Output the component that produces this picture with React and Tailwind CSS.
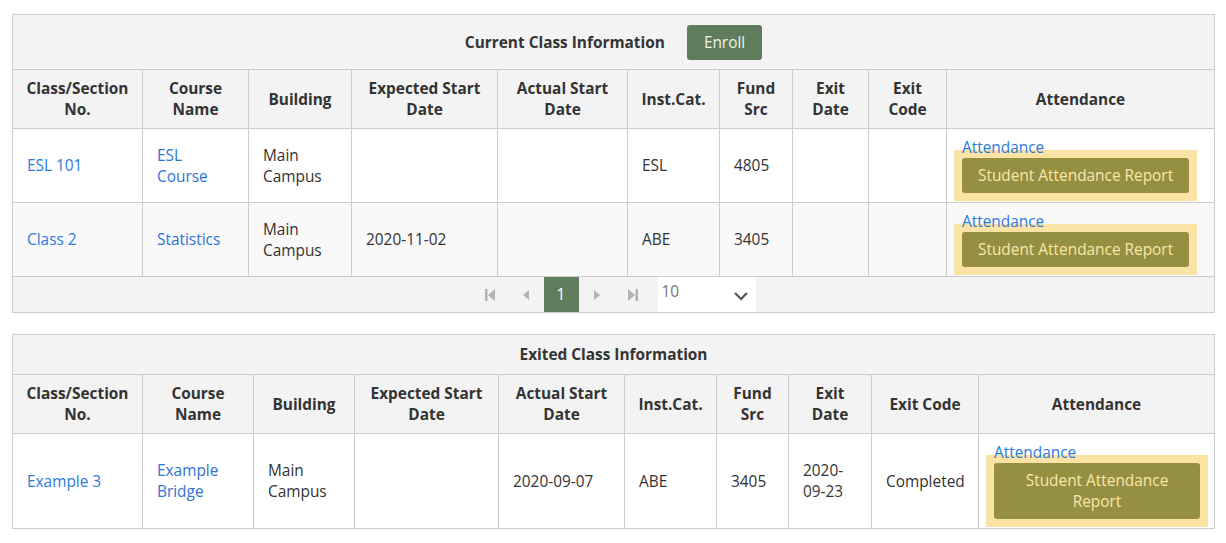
import React from "react";

const font = { fontFamily: '"Open Sans", "Liberation Sans", sans-serif' };

const currentCols = [130, 106, 103, 146, 130, 92, 73, 76, 78, 268];
const exitedCols = [130, 111, 101, 144, 126, 92, 72, 83, 107, 236];

const heads = [
  "Class/Section No.",
  "Course Name",
  "Building",
  "Expected Start Date",
  "Actual Start Date",
  "Inst.Cat.",
  "Fund Src",
  "Exit Date",
  "Exit Code",
  "Attendance",
];

const currentRows = [
  { cls: "ESL 101", course: "ESL Course", building: "Main Campus", exp: "", act: "", cat: "ESL", fund: "4805", exitDate: "", exitCode: "" },
  { cls: "Class 2", course: "Statistics", building: "Main Campus", exp: "2020-11-02", act: "", cat: "ABE", fund: "3405", exitDate: "", exitCode: "" },
];

const exitedRows = [
  { cls: "Example 3", course: "Example Bridge", building: "Main Campus", exp: "", act: "2020-09-07", cat: "ABE", fund: "3405", exitDate: "2020-09-23", exitCode: "Completed" },
];

function HeadRow() {
  return (
    <tr className="bg-[#f3f3f3]">
      {heads.map((h) => (
        <th key={h} className="border border-[#cccccc] px-3 py-2 text-center font-bold leading-[21px] text-[#333333] h-[59px]">
          {h}
        </th>
      ))}
    </tr>
  );
}

function AttendanceCell() {
  return (
    <td className="border border-[#cccccc] pl-[15px] pr-[14px] pt-[8px] pb-[8px] align-top">
      <a href="#" className="block text-[#2b7bdc] leading-[21px]">Attendance</a>
      {/* yellow highlight box around the report button */}
      <div className="block w-fit bg-[#fbe3a6] -m-[8px] p-[8px]">
        <button className="block text-center rounded-[3px] bg-[#958f41] text-[#f8e7ab] px-4 py-[7px] leading-[21px]">
          Student Attendance Report
        </button>
      </div>
    </td>
  );
}

function DataRow({ r, striped, tall }) {
  const td = "border border-[#cccccc] px-[14px] py-2 align-middle";
  return (
    <tr className={`${striped ? "bg-[#f9f9f9]" : "bg-white"} ${tall ? "h-[95px]" : "h-[74px]"}`}>
      <td className={td}><a href="#" className="text-[#2b7bdc]">{r.cls}</a></td>
      <td className={td}><a href="#" className="text-[#2f72d6]">{r.course}</a></td>
      <td className={td}>{r.building}</td>
      <td className={td}>{r.exp}</td>
      <td className={td}>{r.act}</td>
      <td className={td}>{r.cat}</td>
      <td className={td}>{r.fund}</td>
      <td className={td}>{r.exitDate}</td>
      <td className={td}>{r.exitCode}</td>
      <AttendanceCell />
    </tr>
  );
}

function Tri({ dir, bar }) {
  return (
    <svg width="12" height="14" viewBox="0 0 12 14">
      {dir === "left" ? (
        <>
          {bar && <rect x="1" y="1" width="2.5" height="12" fill="#b3b3b3" />}
          <polygon points={bar ? "11,1 4,7 11,13" : "9,2 3,7 9,12"} fill="#b3b3b3" />
        </>
      ) : (
        <>
          <polygon points={bar ? "1,1 8,7 1,13" : "3,2 9,7 3,12"} fill="#b3b3b3" />
          {bar && <rect x="8.5" y="1" width="2.5" height="12" fill="#b3b3b3" />}
        </>
      )}
    </svg>
  );
}

function Pager() {
  return (
    <tr className="bg-[#f3f3f3]">
      <td colSpan={10} className="border border-[#cccccc] p-0 h-[36px]">
        <div className="flex justify-center items-center">
          <span className="w-[36px] h-[35px] flex items-center justify-center"><Tri dir="left" bar /></span>
          <span className="w-[36px] h-[35px] flex items-center justify-center"><Tri dir="left" /></span>
          <span className="w-[35px] h-[35px] flex items-center justify-center bg-[#5f7d5c] text-white">1</span>
          <span className="w-[36px] h-[35px] flex items-center justify-center"><Tri dir="right" /></span>
          <span className="w-[36px] h-[35px] flex items-center justify-center"><Tri dir="right" bar /></span>
          <div className="ml-[7px] w-[98px] h-[35px] bg-white flex items-start justify-between pl-1 pr-[7px]">
            <span className="text-[#777777] leading-[21px] pt-[4px]">10</span>
            <svg width="16" height="10" viewBox="0 0 16 10" className="mt-[14px]">
              <polyline points="2,2 8,8 14,2" fill="none" stroke="#555555" strokeWidth="2.2" />
            </svg>
          </div>
        </div>
      </td>
    </tr>
  );
}

function ClassTable({ title, cols, rows, enroll, pager, tall }) {
  return (
    <table className="table-fixed border-collapse w-[1203px] text-[15.4px] leading-[21px] text-[#333333]">
      <colgroup>
        {cols.map((w, i) => (
          <col key={i} style={{ width: w }} />
        ))}
      </colgroup>
      <tbody>
        <tr className="bg-[#f3f3f3]">
          <td colSpan={10} className={`border border-[#cccccc] ${enroll ? "h-[55px]" : "h-[40px]"}`}>
            <div className="flex justify-center items-center gap-[22px]">
              <span className="font-bold">{title}</span>
              {enroll && (
                <button className="bg-[#5f7d5c] text-[#eef3e6] rounded-[3px] px-[17px] h-[35px] leading-[21px]">Enroll</button>
              )}
            </div>
          </td>
        </tr>
        <HeadRow />
        {rows.map((r, i) => (
          <DataRow key={i} r={r} striped={i % 2 === 1} tall={tall} />
        ))}
        {pager && <Pager />}
      </tbody>
    </table>
  );
}

export default function App() {
  return (
    <div className="bg-white min-h-[543px] pl-3 pt-[14px]" style={font}>
      <ClassTable title="Current Class Information" cols={currentCols} rows={currentRows} enroll pager />
      <div className="h-[21px]" />
      <ClassTable title="Exited Class Information" cols={exitedCols} rows={exitedRows} tall />
    </div>
  );
}
